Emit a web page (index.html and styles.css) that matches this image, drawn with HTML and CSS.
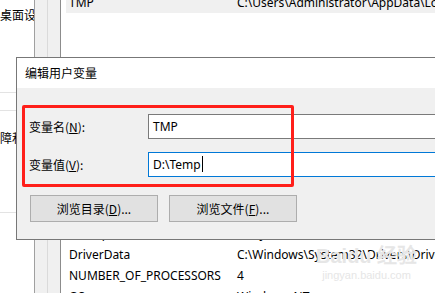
FILE: index.html
```html
<!DOCTYPE html>
<html lang="zh-CN">
<head>
  <meta charset="UTF-8">
  <title>编辑用户变量</title>
  <link rel="stylesheet" href="styles.css">
</head>
<body>
  <div class="screen">
    <div class="side">
      <div class="side-item first">桌面设置</div>
      <div class="side-line top"></div>
      <div class="side-line"></div>
      <div class="side-item second">障和恢复</div>
      <div class="side-line low"></div>
    </div>
    <div class="strip"><div class="strip-inner"></div></div>
    <div class="list">
      <div class="row selected"><span class="name">TMP</span><span class="value">C:\Users\Administrator\AppData\Local\Temp</span></div>
      <div class="row"></div>
      <div class="row"></div>
      <div class="row"><span class="name">ALLUSERSPROFILE</span><span class="value">C:\ProgramData</span></div>
      <div class="row"><span class="name">APPDATA</span><span class="value">C:\Users\Administrator\AppData\Roaming</span></div>
      <div class="row"><span class="name">CommonProgramFiles</span><span class="value">C:\Program Files\Common Files</span></div>
      <div class="row"><span class="name">COMPUTERNAME</span><span class="value">DESKTOP</span></div>
      <div class="row"><span class="name">HOMEDRIVE</span><span class="value">C:</span></div>
      <div class="row"><span class="name">HOMEPATH</span><span class="value">\Users\Administrator</span></div>
      <div class="row"><span class="name">LOCALAPPDATA</span><span class="value">C:\Users\Administrator\AppData\Local</span></div>
      <div class="row"><span class="name">LOGONSERVER</span><span class="value">\\DESKTOP</span></div>
      <div class="row"><span class="name">ComSpec</span><span class="value">C:\Python27</span></div>
      <div class="row"><span class="name">DriverData</span><span class="value">C:\Windows\System32\Drivers\DriverData</span></div>
      <div class="row"><span class="name">NUMBER_OF_PROCESSORS</span><span class="value">4</span></div>
      <div class="row"><span class="name">OS</span><span class="value">Windows_NT</span></div>
    </div>
  </div>

  <div class="watermark">
    <span class="wm-logo">Bai<b>du</b> 经验</span>
    <span class="wm-url">jingyan.baidu.com</span>
  </div>

  <div class="dialog">
    <div class="title">编辑用户变量</div>
    <div class="body">
      <div class="field">
        <label class="label">变量名(<u>N</u>):</label>
        <div class="input">TMP</div>
      </div>
      <div class="field">
        <label class="label">变量值(<u>V</u>):</label>
        <div class="input focused">D:\Temp<span class="caret"></span></div>
      </div>
      <div class="buttons">
        <div class="btn">浏览目录(<u>D</u>)...</div>
        <div class="btn">浏览文件(<u>F</u>)...</div>
      </div>
      <div class="mark"></div>
    </div>
  </div>
</body>
</html>
```

FILE: styles.css
```css
body {
  margin: 0;
  width: 435px;
  height: 293px;
  overflow: hidden;
  position: relative;
  background: #fff;
  font-family: "Noto Sans", "Noto Sans CJK SC", sans-serif;
  font-size: 12px;
  color: #000;
}
.screen {
  display: flex;
  height: 293px;
}
.side {
  width: 34px;
  overflow: hidden;
  white-space: nowrap;
  border-right: 1px solid #a0a0a0;
  font-family: "Noto Sans CJK SC", sans-serif;
}
.side-item {
  height: 17px;
  line-height: 17px;
}
.side-item.first {
  margin-top: 6px;
}
.side-line {
  margin-top: 17px;
  border-top: 1px solid #e3e3e3;
}
.side-line.top {
  margin-top: 69px;
}
.side-item.second {
  margin-top: 18px;
}
.side-line.low {
  margin-top: 66px;
}
.strip {
  width: 25px;
  background: #f0f0f0;
  border-right: 1px solid #8c8c8c;
}
.strip-inner {
  width: 12px;
  height: 100%;
  border-right: 1px solid #dadada;
}
.list {
  flex: 1;
  margin-top: -8px;
  padding-left: 5px;
  overflow: hidden;
}
.row {
  display: flex;
  height: 21px;
  line-height: 21px;
  white-space: nowrap;
  padding-left: 3px;
}
.row.selected {
  background: #f0f0f0;
}
.name {
  width: 168px;
  flex: none;
}
.watermark {
  position: absolute;
  left: 316px;
  top: 244px;
  display: flex;
  flex-direction: column;
  align-items: center;
  color: #e6e6e6;
  font-family: "Liberation Sans", sans-serif;
}
.wm-logo {
  font-size: 20px;
  font-weight: bold;
  line-height: 24px;
}
.wm-url {
  font-size: 11px;
  line-height: 14px;
}
.dialog {
  position: absolute;
  left: 16px;
  top: 57px;
  width: 460px;
  height: 181px;
  border: 1px solid #777;
  background: #f0f0f0;
}
.title {
  height: 30px;
  line-height: 30px;
  padding-left: 8px;
  background: #fff;
  font-family: "Noto Sans CJK SC", sans-serif;
}
.body {
  position: relative;
  padding: 26px 0 0 12px;
}
.field {
  display: flex;
  align-items: center;
  margin-bottom: 13px;
}
.label {
  width: 119px;
  font-family: "Noto Sans CJK SC", sans-serif;
}
.input {
  width: 320px;
  height: 23px;
  line-height: 23px;
  padding-left: 4px;
  background: #fff;
  border: 1px solid #7a7a7a;
}
.input.focused {
  border-color: #0078d7;
}
.caret {
  display: inline-block;
  width: 1px;
  height: 16px;
  margin-left: 1px;
  vertical-align: -3px;
  background: #000;
}
.buttons {
  display: flex;
  gap: 11px;
  margin: 18px 0 0 1px;
}
.btn {
  width: 126px;
  height: 25px;
  line-height: 25px;
  text-align: center;
  background: #e1e1e1;
  border: 1px solid #adadad;
  font-family: "Noto Sans CJK SC", sans-serif;
}
.mark {
  position: absolute;
  left: 5px;
  top: 17px;
  width: 266px;
  height: 76px;
  border: 3px solid #ff1f1a;
  border-radius: 2px;
}
```
